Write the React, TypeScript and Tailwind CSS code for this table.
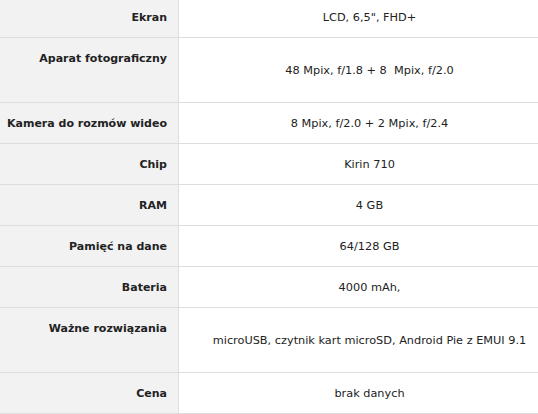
import React from "react";

interface SpecRow {
  label: string;
  value: string;
  tall?: boolean;
}

const rows: SpecRow[] = [
  { label: "Ekran", value: "LCD, 6,5\", FHD+" },
  { label: "Aparat fotograficzny", value: "48 Mpix, f/1.8 + 8  Mpix, f/2.0", tall: true },
  { label: "Kamera do rozmów wideo", value: "8 Mpix, f/2.0 + 2 Mpix, f/2.4" },
  { label: "Chip", value: "Kirin 710" },
  { label: "RAM", value: "4 GB" },
  { label: "Pamięć na dane", value: "64/128 GB" },
  { label: "Bateria", value: "4000 mAh," },
  {
    label: "Ważne rozwiązania",
    value: "microUSB, czytnik kart microSD, Android Pie z EMUI 9.1",
    tall: true,
  },
  { label: "Cena", value: "brak danych" },
];

export default function App() {
  return (
    <div className="w-[538px] h-[414px] overflow-hidden bg-white">
      <div
        className="-mt-[3px] w-[560px] grid grid-cols-[179px_1fr] text-[#222] whitespace-pre"
        style={{ fontFamily: '"DejaVu Sans", Verdana, sans-serif' }}
      >
        {rows.map((row) => (
          <React.Fragment key={row.label}>
            <div
              className={`bg-[#f2f2f2] border-r border-b border-[#dddddd] text-right text-[11px] font-bold pr-[11px] pt-[13px] leading-4 ${
                row.tall ? "h-[65px]" : "h-[41px]"
              }`}
            >
              {row.label}
            </div>
            <div className="border-b border-[#dddddd] flex items-center justify-center text-[11.3px] leading-4 pt-[1px]">
              {row.value}
            </div>
          </React.Fragment>
        ))}
      </div>
    </div>
  );
}
